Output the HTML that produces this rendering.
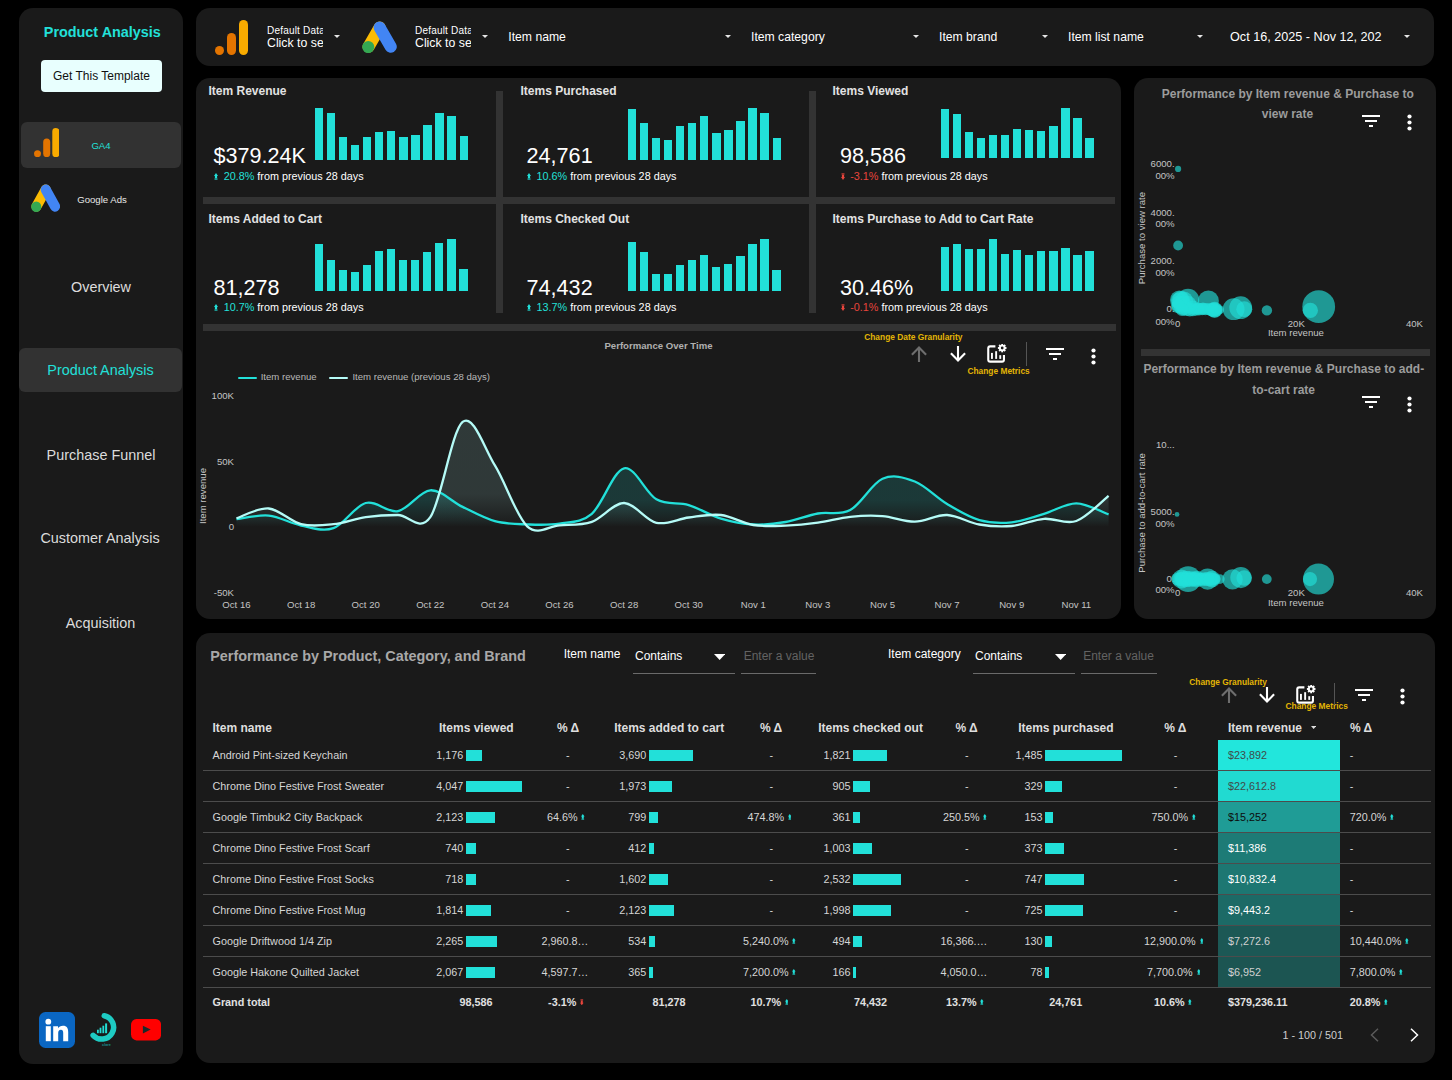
<!DOCTYPE html>
<html><head><meta charset="utf-8"><title>Product Analysis</title>
<style>
html,body{margin:0;padding:0;background:#000;}
body{width:1452px;height:1080px;overflow:hidden;position:relative;font-family:"Liberation Sans",sans-serif;}
#root{position:absolute;left:0;top:0;width:1452px;height:1080px;background:#000;overflow:hidden;}
#root div{box-sizing:border-box;}
</style></head><body><div id="root">
<div style="position:absolute;left:19.2px;top:8.2px;width:164.0px;height:1055.4px;background:#1a1a1a;border-radius:14px;"></div>
<div style="position:absolute;left:195.6px;top:8.2px;width:1238.4px;height:57.7px;background:#1a1a1a;border-radius:14px;"></div>
<div style="position:absolute;left:195.6px;top:78px;width:925.6px;height:541.3px;background:#1a1a1a;border-radius:14px;"></div>
<div style="position:absolute;left:1134.2px;top:78px;width:302.0px;height:540.8px;background:#1a1a1a;border-radius:14px;"></div>
<div style="position:absolute;left:195.6px;top:633.4px;width:1239.0px;height:429.9px;background:#1a1a1a;border-radius:14px;"></div>
<div style="position:absolute;top:23.00px;font-size:14.4px;line-height:19px;color:#22e0d9;font-weight:700;white-space:pre;left:-97.70px;width:400px;text-align:center;">Product Analysis</div>
<div style="position:absolute;left:41px;top:60px;width:121px;height:32px;background:#e8fffe;border-radius:4px;"></div>
<div style="position:absolute;top:68.00px;font-size:12px;line-height:16px;color:#111;font-weight:400;white-space:pre;left:-98.50px;width:400px;text-align:center;">Get This Template</div>
<div style="position:absolute;left:21px;top:122px;width:160px;height:46px;background:#323232;border-radius:6px;"></div>
<svg style="position:absolute;left:33.8px;top:127.5px;" width="25.5" height="29.3" viewBox="0 0 25.5 29.3"><circle cx="3.5" cy="25.7" r="3.5" fill="#e37400"/><rect x="9.2" y="10.5" width="7" height="18.7" rx="3.5" fill="#e37400"/><rect x="18.3" y="0" width="7.1" height="29.2" rx="3.5" fill="#f9ab00"/></svg>
<div style="position:absolute;top:139.50px;font-size:9.6px;line-height:12px;color:#22e0d9;font-weight:400;white-space:pre;left:-99.00px;width:400px;text-align:center;">GA4</div>
<svg preserveAspectRatio="none" style="position:absolute;left:30.5px;top:183.8px;" width="29.5" height="28.185142857142857" viewBox="0 0 35 32"><line x1="17.5" y1="6.5" x2="6.5" y2="25.5" stroke="#fbbc04" stroke-width="12" stroke-linecap="round"/><line x1="17.5" y1="6.5" x2="28.5" y2="25.5" stroke="#4285f4" stroke-width="12" stroke-linecap="round"/><circle cx="6.2" cy="25.8" r="6" fill="#34a853"/></svg>
<div style="position:absolute;top:194.00px;font-size:9.6px;line-height:12px;color:#e6e6e6;font-weight:400;white-space:pre;left:-98.00px;width:400px;text-align:center;">Google Ads</div>
<div style="position:absolute;top:277.50px;font-size:14.4px;line-height:19px;color:#dcdcdc;font-weight:400;white-space:pre;left:-99.00px;width:400px;text-align:center;">Overview</div>
<div style="position:absolute;left:19px;top:348px;width:163px;height:44px;background:#323232;border-radius:6px;"></div>
<div style="position:absolute;top:360.50px;font-size:14.4px;line-height:19px;color:#22e0d9;font-weight:400;white-space:pre;left:-99.50px;width:400px;text-align:center;">Product Analysis</div>
<div style="position:absolute;top:445.50px;font-size:14.4px;line-height:19px;color:#dcdcdc;font-weight:400;white-space:pre;left:-99.00px;width:400px;text-align:center;">Purchase Funnel</div>
<div style="position:absolute;top:528.50px;font-size:14.4px;line-height:19px;color:#dcdcdc;font-weight:400;white-space:pre;left:-100.00px;width:400px;text-align:center;">Customer Analysis</div>
<div style="position:absolute;top:613.50px;font-size:14.4px;line-height:19px;color:#dcdcdc;font-weight:400;white-space:pre;left:-99.50px;width:400px;text-align:center;">Acquisition</div>
<div style="position:absolute;left:39px;top:1011.8px;width:36px;height:36.2px;background:#0a66c2;border-radius:6.5px;"></div>
<svg style="position:absolute;left:39px;top:1012px;" width="36" height="36" viewBox="0 0 36 36"><circle cx="9.3" cy="9.7" r="2.9" fill="#fff"/><rect x="6.8" y="14.2" width="5" height="15" fill="#fff"/><path d="M14.2 14.2h4.8v2.1c.9-1.5 2.6-2.5 5-2.5 4 0 5.2 2.6 5.2 6.3v9.1h-5v-8.2c0-1.9-.4-3.2-2.3-3.2-2 0-2.7 1.4-2.7 3.3v8.1h-5z" fill="#fff"/></svg>
<svg style="position:absolute;left:84px;top:1006px;" width="40" height="46" viewBox="0 0 40 46"><path d="M20.25 9.76 A11.8 11.8 0 1 1 9.13 29.3" fill="none" stroke="#1ecbc3" stroke-width="5.5" stroke-linecap="round"/><rect x="13" y="23.7" width="1.8" height="3.5" fill="#22ddd4"/><rect x="15.6" y="21.7" width="1.8" height="5.5" fill="#22ddd4"/><rect x="18.4" y="19.7" width="1.8" height="7.5" fill="#22ddd4"/><rect x="21.1" y="17.4" width="2" height="9.8" fill="#22ddd4"/><text x="22.4" y="40.4" font-size="3.7" font-weight="700" fill="#17918c" text-anchor="middle" font-family="Liberation Sans">clare</text></svg>
<svg style="position:absolute;left:130.8px;top:1019.3px;" width="30.2" height="21.4" viewBox="0 0 30.2 21.4"><rect x="0" y="0" width="30.2" height="21.4" rx="5.4" ry="6.2" fill="#ff0000"/><path d="M11.9 6.7 L19.7 10.6 L11.9 14.5Z" fill="#1a2a2a"/></svg>
<svg style="position:absolute;left:215px;top:19.7px;" width="33" height="35" viewBox="0 0 33 35"><circle cx="4.5" cy="30.5" r="4.5" fill="#e37400"/><rect x="12" y="13" width="9" height="22" rx="4.5" fill="#e37400"/><rect x="24" y="0" width="9" height="35" rx="4.5" fill="#f9ab00"/></svg>
<div style="position:absolute;left:267px;top:24px;width:56px;height:28px;overflow:hidden;"><div style="font-size:10px;letter-spacing:0.2px;line-height:12px;color:#fff;white-space:pre;margin-top:0.8px">Default Data</div><div style="font-size:12.3px;line-height:14px;color:#fff;white-space:pre;margin-top:-0.8px">Click to select your data</div></div>
<div style="position:absolute;left:415px;top:24px;width:56px;height:28px;overflow:hidden;"><div style="font-size:10px;letter-spacing:0.2px;line-height:12px;color:#fff;white-space:pre;margin-top:0.8px">Default Data</div><div style="font-size:12.3px;line-height:14px;color:#fff;white-space:pre;margin-top:-0.8px">Click to select your data</div></div>
<svg style="position:absolute;left:333.5px;top:35px;" width="6" height="3" viewBox="0 0 6 3"><path d="M0 0H6L3.0 3Z" fill="#e6e6e6"/></svg>
<svg preserveAspectRatio="none" style="position:absolute;left:361.7px;top:20.8px;" width="35.3" height="32.27428571428571" viewBox="0 0 35 32"><line x1="17.5" y1="6.5" x2="6.5" y2="25.5" stroke="#fbbc04" stroke-width="12" stroke-linecap="round"/><line x1="17.5" y1="6.5" x2="28.5" y2="25.5" stroke="#4285f4" stroke-width="12" stroke-linecap="round"/><circle cx="6.2" cy="25.8" r="6" fill="#34a853"/></svg>
<svg style="position:absolute;left:481.5px;top:35px;" width="6" height="3" viewBox="0 0 6 3"><path d="M0 0H6L3.0 3Z" fill="#e6e6e6"/></svg>
<div style="position:absolute;top:28.50px;font-size:12.2px;line-height:16px;color:#fff;font-weight:400;white-space:pre;left:508.30px;">Item name</div>
<svg style="position:absolute;left:724.5px;top:35px;" width="6" height="3" viewBox="0 0 6 3"><path d="M0 0H6L3.0 3Z" fill="#e6e6e6"/></svg>
<div style="position:absolute;top:28.50px;font-size:12.2px;line-height:16px;color:#fff;font-weight:400;white-space:pre;left:751.00px;">Item category</div>
<svg style="position:absolute;left:912.5px;top:35px;" width="6" height="3" viewBox="0 0 6 3"><path d="M0 0H6L3.0 3Z" fill="#e6e6e6"/></svg>
<div style="position:absolute;top:28.50px;font-size:12.2px;line-height:16px;color:#fff;font-weight:400;white-space:pre;left:939.00px;">Item brand</div>
<svg style="position:absolute;left:1041.5px;top:35px;" width="6" height="3" viewBox="0 0 6 3"><path d="M0 0H6L3.0 3Z" fill="#e6e6e6"/></svg>
<div style="position:absolute;top:28.50px;font-size:12.2px;line-height:16px;color:#fff;font-weight:400;white-space:pre;left:1068.00px;">Item list name</div>
<svg style="position:absolute;left:1196.5px;top:35px;" width="6" height="3" viewBox="0 0 6 3"><path d="M0 0H6L3.0 3Z" fill="#e6e6e6"/></svg>
<div style="position:absolute;top:28.80px;font-size:12.63px;line-height:16px;color:#fff;font-weight:400;white-space:pre;left:1230.00px;">Oct 16, 2025 - Nov 12, 202</div>
<svg style="position:absolute;left:1403.5px;top:35px;" width="6" height="3" viewBox="0 0 6 3"><path d="M0 0H6L3.0 3Z" fill="#e6e6e6"/></svg>
<div style="position:absolute;left:203px;top:197px;width:912px;height:7px;background:#333333;border-radius:0px;"></div>
<div style="position:absolute;left:203px;top:324px;width:913px;height:7px;background:#333333;border-radius:0px;"></div>
<div style="position:absolute;left:496px;top:91px;width:7px;height:222px;background:#333333;border-radius:0px;"></div>
<div style="position:absolute;left:809px;top:91px;width:7px;height:222px;background:#333333;border-radius:0px;"></div>
<div style="position:absolute;top:83.00px;font-size:12px;line-height:16px;color:#e2e2e2;font-weight:700;white-space:pre;left:208.50px;">Item Revenue</div>
<div style="position:absolute;left:213.5px;top:143.32px;font-size:21.6px;line-height:26px;color:#fff;white-space:pre">$379.24K</div>
<svg style="position:absolute;left:214.29999999999998px;top:172.9px;" width="4.0" height="7.0" viewBox="0 0 4 7"><g><path d="M2 0 L4 2.9 L3.1 2.9 L3.1 5.2 L0.9 5.2 L0.9 2.9 L0 2.9Z" fill="#22e0d9"/><rect x="0.5" y="5.2" width="3" height="1.8" fill="#22e0d9" opacity="0.62"/></g></svg>
<div style="position:absolute;left:223.7px;top:168.66px;font-size:10.8px;line-height:14px;color:#fff;white-space:pre"><span style="color:#22e0d9">20.8%</span> from previous 28 days</div>
<div style="position:absolute;left:314.80px;top:107.80px;width:8.3px;height:52.40px;background:#22e0d9"></div>
<div style="position:absolute;left:326.86px;top:113.00px;width:8.3px;height:47.20px;background:#22e0d9"></div>
<div style="position:absolute;left:338.92px;top:136.90px;width:8.3px;height:23.30px;background:#22e0d9"></div>
<div style="position:absolute;left:350.98px;top:145.00px;width:8.3px;height:15.20px;background:#22e0d9"></div>
<div style="position:absolute;left:363.04px;top:136.90px;width:8.3px;height:23.30px;background:#22e0d9"></div>
<div style="position:absolute;left:375.10px;top:132.10px;width:8.3px;height:28.10px;background:#22e0d9"></div>
<div style="position:absolute;left:387.16px;top:130.50px;width:8.3px;height:29.70px;background:#22e0d9"></div>
<div style="position:absolute;left:399.22px;top:136.90px;width:8.3px;height:23.30px;background:#22e0d9"></div>
<div style="position:absolute;left:411.28px;top:135.20px;width:8.3px;height:25.00px;background:#22e0d9"></div>
<div style="position:absolute;left:423.34px;top:125.10px;width:8.3px;height:35.10px;background:#22e0d9"></div>
<div style="position:absolute;left:435.40px;top:113.40px;width:8.3px;height:46.80px;background:#22e0d9"></div>
<div style="position:absolute;left:447.46px;top:116.10px;width:8.3px;height:44.10px;background:#22e0d9"></div>
<div style="position:absolute;left:459.52px;top:136.30px;width:8.3px;height:23.90px;background:#22e0d9"></div>
<div style="position:absolute;top:83.00px;font-size:12px;line-height:16px;color:#e2e2e2;font-weight:700;white-space:pre;left:520.50px;">Items Purchased</div>
<div style="position:absolute;left:526.6px;top:143.32px;font-size:21.6px;line-height:26px;color:#fff;white-space:pre">24,761</div>
<svg style="position:absolute;left:527.2px;top:172.9px;" width="4.0" height="7.0" viewBox="0 0 4 7"><g><path d="M2 0 L4 2.9 L3.1 2.9 L3.1 5.2 L0.9 5.2 L0.9 2.9 L0 2.9Z" fill="#22e0d9"/><rect x="0.5" y="5.2" width="3" height="1.8" fill="#22e0d9" opacity="0.62"/></g></svg>
<div style="position:absolute;left:536.6px;top:168.66px;font-size:10.8px;line-height:14px;color:#fff;white-space:pre"><span style="color:#22e0d9">10.6%</span> from previous 28 days</div>
<div style="position:absolute;left:627.80px;top:108.80px;width:8.3px;height:51.40px;background:#22e0d9"></div>
<div style="position:absolute;left:639.86px;top:123.00px;width:8.3px;height:37.20px;background:#22e0d9"></div>
<div style="position:absolute;left:651.92px;top:137.90px;width:8.3px;height:22.30px;background:#22e0d9"></div>
<div style="position:absolute;left:663.98px;top:140.20px;width:8.3px;height:20.00px;background:#22e0d9"></div>
<div style="position:absolute;left:676.04px;top:126.10px;width:8.3px;height:34.10px;background:#22e0d9"></div>
<div style="position:absolute;left:688.10px;top:123.00px;width:8.3px;height:37.20px;background:#22e0d9"></div>
<div style="position:absolute;left:700.16px;top:116.10px;width:8.3px;height:44.10px;background:#22e0d9"></div>
<div style="position:absolute;left:712.22px;top:132.50px;width:8.3px;height:27.70px;background:#22e0d9"></div>
<div style="position:absolute;left:724.28px;top:129.60px;width:8.3px;height:30.60px;background:#22e0d9"></div>
<div style="position:absolute;left:736.34px;top:120.90px;width:8.3px;height:39.30px;background:#22e0d9"></div>
<div style="position:absolute;left:748.40px;top:108.00px;width:8.3px;height:52.20px;background:#22e0d9"></div>
<div style="position:absolute;left:760.46px;top:112.80px;width:8.3px;height:47.40px;background:#22e0d9"></div>
<div style="position:absolute;left:772.52px;top:138.20px;width:8.3px;height:22.00px;background:#22e0d9"></div>
<div style="position:absolute;top:83.00px;font-size:12px;line-height:16px;color:#e2e2e2;font-weight:700;white-space:pre;left:832.50px;">Items Viewed</div>
<div style="position:absolute;left:840px;top:143.32px;font-size:21.6px;line-height:26px;color:#fff;white-space:pre">98,586</div>
<svg style="position:absolute;left:840.8000000000001px;top:172.9px;" width="4.0" height="7.0" viewBox="0 0 4 7"><g transform="rotate(180 2 3.5)"><path d="M2 0 L4 2.9 L3.1 2.9 L3.1 5.2 L0.9 5.2 L0.9 2.9 L0 2.9Z" fill="#e8453c"/><rect x="0.5" y="5.2" width="3" height="1.8" fill="#e8453c" opacity="0.62"/></g></svg>
<div style="position:absolute;left:850.2px;top:168.66px;font-size:10.8px;line-height:14px;color:#fff;white-space:pre"><span style="color:#e8453c">-3.1%</span> from previous 28 days</div>
<div style="position:absolute;left:940.70px;top:108.90px;width:8.3px;height:49.10px;background:#22e0d9"></div>
<div style="position:absolute;left:952.76px;top:114.30px;width:8.3px;height:43.70px;background:#22e0d9"></div>
<div style="position:absolute;left:964.82px;top:131.80px;width:8.3px;height:26.20px;background:#22e0d9"></div>
<div style="position:absolute;left:976.88px;top:138.20px;width:8.3px;height:19.80px;background:#22e0d9"></div>
<div style="position:absolute;left:988.94px;top:134.90px;width:8.3px;height:23.10px;background:#22e0d9"></div>
<div style="position:absolute;left:1001.00px;top:134.50px;width:8.3px;height:23.50px;background:#22e0d9"></div>
<div style="position:absolute;left:1013.06px;top:129.10px;width:8.3px;height:28.90px;background:#22e0d9"></div>
<div style="position:absolute;left:1025.12px;top:130.10px;width:8.3px;height:27.90px;background:#22e0d9"></div>
<div style="position:absolute;left:1037.18px;top:131.20px;width:8.3px;height:26.80px;background:#22e0d9"></div>
<div style="position:absolute;left:1049.24px;top:126.20px;width:8.3px;height:31.80px;background:#22e0d9"></div>
<div style="position:absolute;left:1061.30px;top:108.10px;width:8.3px;height:49.90px;background:#22e0d9"></div>
<div style="position:absolute;left:1073.36px;top:118.10px;width:8.3px;height:39.90px;background:#22e0d9"></div>
<div style="position:absolute;left:1085.42px;top:137.60px;width:8.3px;height:20.40px;background:#22e0d9"></div>
<div style="position:absolute;top:210.70px;font-size:12px;line-height:16px;color:#e2e2e2;font-weight:700;white-space:pre;left:208.50px;">Items Added to Cart</div>
<div style="position:absolute;left:213.5px;top:275.42px;font-size:21.6px;line-height:26px;color:#fff;white-space:pre">81,278</div>
<svg style="position:absolute;left:214.29999999999998px;top:304.1px;" width="4.0" height="7.0" viewBox="0 0 4 7"><g><path d="M2 0 L4 2.9 L3.1 2.9 L3.1 5.2 L0.9 5.2 L0.9 2.9 L0 2.9Z" fill="#22e0d9"/><rect x="0.5" y="5.2" width="3" height="1.8" fill="#22e0d9" opacity="0.62"/></g></svg>
<div style="position:absolute;left:223.7px;top:299.86px;font-size:10.8px;line-height:14px;color:#fff;white-space:pre"><span style="color:#22e0d9">10.7%</span> from previous 28 days</div>
<div style="position:absolute;left:314.60px;top:244.10px;width:8.3px;height:46.60px;background:#22e0d9"></div>
<div style="position:absolute;left:326.66px;top:259.50px;width:8.3px;height:31.20px;background:#22e0d9"></div>
<div style="position:absolute;left:338.72px;top:269.90px;width:8.3px;height:20.80px;background:#22e0d9"></div>
<div style="position:absolute;left:350.78px;top:271.80px;width:8.3px;height:18.90px;background:#22e0d9"></div>
<div style="position:absolute;left:362.84px;top:264.90px;width:8.3px;height:25.80px;background:#22e0d9"></div>
<div style="position:absolute;left:374.90px;top:250.80px;width:8.3px;height:39.90px;background:#22e0d9"></div>
<div style="position:absolute;left:386.96px;top:248.50px;width:8.3px;height:42.20px;background:#22e0d9"></div>
<div style="position:absolute;left:399.02px;top:260.30px;width:8.3px;height:30.40px;background:#22e0d9"></div>
<div style="position:absolute;left:411.08px;top:259.70px;width:8.3px;height:31.00px;background:#22e0d9"></div>
<div style="position:absolute;left:423.14px;top:251.60px;width:8.3px;height:39.10px;background:#22e0d9"></div>
<div style="position:absolute;left:435.20px;top:242.70px;width:8.3px;height:48.00px;background:#22e0d9"></div>
<div style="position:absolute;left:447.26px;top:238.50px;width:8.3px;height:52.20px;background:#22e0d9"></div>
<div style="position:absolute;left:459.32px;top:268.70px;width:8.3px;height:22.00px;background:#22e0d9"></div>
<div style="position:absolute;top:210.70px;font-size:12px;line-height:16px;color:#e2e2e2;font-weight:700;white-space:pre;left:520.50px;">Items Checked Out</div>
<div style="position:absolute;left:526.6px;top:275.42px;font-size:21.6px;line-height:26px;color:#fff;white-space:pre">74,432</div>
<svg style="position:absolute;left:527.2px;top:304.1px;" width="4.0" height="7.0" viewBox="0 0 4 7"><g><path d="M2 0 L4 2.9 L3.1 2.9 L3.1 5.2 L0.9 5.2 L0.9 2.9 L0 2.9Z" fill="#22e0d9"/><rect x="0.5" y="5.2" width="3" height="1.8" fill="#22e0d9" opacity="0.62"/></g></svg>
<div style="position:absolute;left:536.6px;top:299.86px;font-size:10.8px;line-height:14px;color:#fff;white-space:pre"><span style="color:#22e0d9">13.7%</span> from previous 28 days</div>
<div style="position:absolute;left:627.70px;top:241.60px;width:8.3px;height:49.10px;background:#22e0d9"></div>
<div style="position:absolute;left:639.76px;top:252.40px;width:8.3px;height:38.30px;background:#22e0d9"></div>
<div style="position:absolute;left:651.82px;top:273.70px;width:8.3px;height:17.00px;background:#22e0d9"></div>
<div style="position:absolute;left:663.88px;top:273.90px;width:8.3px;height:16.80px;background:#22e0d9"></div>
<div style="position:absolute;left:675.94px;top:264.50px;width:8.3px;height:26.20px;background:#22e0d9"></div>
<div style="position:absolute;left:688.00px;top:259.70px;width:8.3px;height:31.00px;background:#22e0d9"></div>
<div style="position:absolute;left:700.06px;top:254.50px;width:8.3px;height:36.20px;background:#22e0d9"></div>
<div style="position:absolute;left:712.12px;top:266.60px;width:8.3px;height:24.10px;background:#22e0d9"></div>
<div style="position:absolute;left:724.18px;top:263.50px;width:8.3px;height:27.20px;background:#22e0d9"></div>
<div style="position:absolute;left:736.24px;top:255.60px;width:8.3px;height:35.10px;background:#22e0d9"></div>
<div style="position:absolute;left:748.30px;top:244.10px;width:8.3px;height:46.60px;background:#22e0d9"></div>
<div style="position:absolute;left:760.36px;top:238.50px;width:8.3px;height:52.20px;background:#22e0d9"></div>
<div style="position:absolute;left:772.42px;top:269.50px;width:8.3px;height:21.20px;background:#22e0d9"></div>
<div style="position:absolute;top:210.70px;font-size:12px;line-height:16px;color:#e2e2e2;font-weight:700;white-space:pre;left:832.50px;">Items Purchase to Add to Cart Rate</div>
<div style="position:absolute;left:840px;top:275.42px;font-size:21.6px;line-height:26px;color:#fff;white-space:pre">30.46%</div>
<svg style="position:absolute;left:840.8000000000001px;top:304.1px;" width="4.0" height="7.0" viewBox="0 0 4 7"><g transform="rotate(180 2 3.5)"><path d="M2 0 L4 2.9 L3.1 2.9 L3.1 5.2 L0.9 5.2 L0.9 2.9 L0 2.9Z" fill="#e8453c"/><rect x="0.5" y="5.2" width="3" height="1.8" fill="#e8453c" opacity="0.62"/></g></svg>
<div style="position:absolute;left:850.2px;top:299.86px;font-size:10.8px;line-height:14px;color:#fff;white-space:pre"><span style="color:#e8453c">-0.1%</span> from previous 28 days</div>
<div style="position:absolute;left:940.70px;top:247.20px;width:8.3px;height:43.50px;background:#22e0d9"></div>
<div style="position:absolute;left:952.76px;top:243.90px;width:8.3px;height:46.80px;background:#22e0d9"></div>
<div style="position:absolute;left:964.82px;top:248.70px;width:8.3px;height:42.00px;background:#22e0d9"></div>
<div style="position:absolute;left:976.88px;top:249.10px;width:8.3px;height:41.60px;background:#22e0d9"></div>
<div style="position:absolute;left:988.94px;top:238.50px;width:8.3px;height:52.20px;background:#22e0d9"></div>
<div style="position:absolute;left:1001.00px;top:253.50px;width:8.3px;height:37.20px;background:#22e0d9"></div>
<div style="position:absolute;left:1013.06px;top:249.50px;width:8.3px;height:41.20px;background:#22e0d9"></div>
<div style="position:absolute;left:1025.12px;top:254.50px;width:8.3px;height:36.20px;background:#22e0d9"></div>
<div style="position:absolute;left:1037.18px;top:251.40px;width:8.3px;height:39.30px;background:#22e0d9"></div>
<div style="position:absolute;left:1049.24px;top:250.80px;width:8.3px;height:39.90px;background:#22e0d9"></div>
<div style="position:absolute;left:1061.30px;top:247.60px;width:8.3px;height:43.10px;background:#22e0d9"></div>
<div style="position:absolute;left:1073.36px;top:254.50px;width:8.3px;height:36.20px;background:#22e0d9"></div>
<div style="position:absolute;left:1085.42px;top:251.20px;width:8.3px;height:39.50px;background:#22e0d9"></div>
<div style="position:absolute;top:339.70px;font-size:9.6px;line-height:12px;color:#b0b0b0;font-weight:700;white-space:pre;left:458.50px;width:400px;text-align:center;">Performance Over Time</div>
<div style="position:absolute;top:331.70px;font-size:8.4px;line-height:11px;color:#e3b505;font-weight:700;white-space:pre;left:864.20px;">Change Date Granularity</div>
<svg style="position:absolute;left:911px;top:346.1px;" width="16" height="16" viewBox="0 0 16 16"><path d="M8 16V1.8M0.9 8.7L8 1.5L15.1 8.7" fill="none" stroke="#6e6e6e" stroke-width="2.1"/></svg>
<svg style="position:absolute;left:950px;top:346.1px;" width="16" height="16" viewBox="0 0 16 16"><path d="M8 0V14.2M0.9 7.3L8 14.5L15.1 7.3" fill="none" stroke="#fff" stroke-width="2.1"/></svg>
<svg style="position:absolute;left:987px;top:343.9px;" width="19.6" height="19" viewBox="0 0 19.6 19"><path d="M8.4 2.35H3.2A2 2 0 0 0 1.25 4.3V15.7A2 2 0 0 0 3.2 17.65H15A2 2 0 0 0 16.95 15.7V11" fill="none" stroke="#fff" stroke-width="2.1"/><rect x="4" y="8.9" width="1.9" height="6" fill="#fff"/><rect x="8.2" y="7.2" width="1.9" height="7.7" fill="#fff"/><rect x="12.3" y="11.2" width="1.9" height="3.7" fill="#fff"/><circle cx="15.2" cy="4.0" r="2.35" fill="none" stroke="#fff" stroke-width="1.9"/><rect x="14.25" y="-0.2999999999999998" width="1.9" height="2" fill="#fff" transform="rotate(0 15.2 4.0)"/><rect x="14.25" y="-0.2999999999999998" width="1.9" height="2" fill="#fff" transform="rotate(45 15.2 4.0)"/><rect x="14.25" y="-0.2999999999999998" width="1.9" height="2" fill="#fff" transform="rotate(90 15.2 4.0)"/><rect x="14.25" y="-0.2999999999999998" width="1.9" height="2" fill="#fff" transform="rotate(135 15.2 4.0)"/><rect x="14.25" y="-0.2999999999999998" width="1.9" height="2" fill="#fff" transform="rotate(180 15.2 4.0)"/><rect x="14.25" y="-0.2999999999999998" width="1.9" height="2" fill="#fff" transform="rotate(225 15.2 4.0)"/><rect x="14.25" y="-0.2999999999999998" width="1.9" height="2" fill="#fff" transform="rotate(270 15.2 4.0)"/><rect x="14.25" y="-0.2999999999999998" width="1.9" height="2" fill="#fff" transform="rotate(315 15.2 4.0)"/></svg>
<div style="position:absolute;top:365.70px;font-size:8.4px;line-height:11px;color:#e3b505;font-weight:700;white-space:pre;left:967.40px;">Change Metrics</div>
<div style="position:absolute;left:1025.5px;top:342px;width:1px;height:24px;background:#555;border-radius:0px;"></div>
<svg style="position:absolute;left:1046px;top:348px;" width="18" height="12" viewBox="0 0 18 12"><rect x="0" y="0" width="18" height="2" fill="#fff"/><rect x="3" y="5" width="12" height="2" fill="#fff"/><rect x="7" y="10" width="4" height="2" fill="#fff"/></svg>
<svg style="position:absolute;left:1090.5px;top:347.5px;" width="5" height="17" viewBox="0 0 5 17"><circle cx="2.5" cy="2.5" r="2.1" fill="#fff"/><circle cx="2.5" cy="8.5" r="2.1" fill="#fff"/><circle cx="2.5" cy="14.5" r="2.1" fill="#fff"/></svg>
<div style="position:absolute;left:237.7px;top:376.6px;width:19px;height:2.3px;background:#22e0d9;border-radius:1px;"></div>
<div style="position:absolute;top:371.20px;font-size:9.6px;line-height:12px;color:#b8b8b8;font-weight:400;white-space:pre;left:260.70px;">Item revenue</div>
<div style="position:absolute;left:328.8px;top:376.6px;width:19px;height:2.3px;background:#b5fbf7;border-radius:1px;"></div>
<div style="position:absolute;top:371.20px;font-size:9.6px;line-height:12px;color:#b8b8b8;font-weight:400;white-space:pre;left:352.40px;">Item revenue (previous 28 days)</div>
<div style="position:absolute;top:390.30px;font-size:9.6px;line-height:12px;color:#c4c4c4;font-weight:400;white-space:pre;right:1218.00px;text-align:right;">100K</div>
<div style="position:absolute;top:456.10px;font-size:9.6px;line-height:12px;color:#c4c4c4;font-weight:400;white-space:pre;right:1218.00px;text-align:right;">50K</div>
<div style="position:absolute;top:521.10px;font-size:9.6px;line-height:12px;color:#c4c4c4;font-weight:400;white-space:pre;right:1218.00px;text-align:right;">0</div>
<div style="position:absolute;top:587.30px;font-size:9.6px;line-height:12px;color:#c4c4c4;font-weight:400;white-space:pre;right:1218.00px;text-align:right;">-50K</div>
<div style="position:absolute;left:153px;top:489.5px;width:100px;height:12px;line-height:12px;font-size:9.6px;color:#c4c4c4;text-align:center;transform:rotate(-90deg);white-space:pre">Item revenue</div>
<div style="position:absolute;top:599.20px;font-size:9.6px;line-height:12px;color:#c4c4c4;font-weight:400;white-space:pre;left:36.50px;width:400px;text-align:center;">Oct 16</div>
<div style="position:absolute;top:599.20px;font-size:9.6px;line-height:12px;color:#c4c4c4;font-weight:400;white-space:pre;left:101.10px;width:400px;text-align:center;">Oct 18</div>
<div style="position:absolute;top:599.20px;font-size:9.6px;line-height:12px;color:#c4c4c4;font-weight:400;white-space:pre;left:165.70px;width:400px;text-align:center;">Oct 20</div>
<div style="position:absolute;top:599.20px;font-size:9.6px;line-height:12px;color:#c4c4c4;font-weight:400;white-space:pre;left:230.30px;width:400px;text-align:center;">Oct 22</div>
<div style="position:absolute;top:599.20px;font-size:9.6px;line-height:12px;color:#c4c4c4;font-weight:400;white-space:pre;left:294.90px;width:400px;text-align:center;">Oct 24</div>
<div style="position:absolute;top:599.20px;font-size:9.6px;line-height:12px;color:#c4c4c4;font-weight:400;white-space:pre;left:359.50px;width:400px;text-align:center;">Oct 26</div>
<div style="position:absolute;top:599.20px;font-size:9.6px;line-height:12px;color:#c4c4c4;font-weight:400;white-space:pre;left:424.10px;width:400px;text-align:center;">Oct 28</div>
<div style="position:absolute;top:599.20px;font-size:9.6px;line-height:12px;color:#c4c4c4;font-weight:400;white-space:pre;left:488.70px;width:400px;text-align:center;">Oct 30</div>
<div style="position:absolute;top:599.20px;font-size:9.6px;line-height:12px;color:#c4c4c4;font-weight:400;white-space:pre;left:553.30px;width:400px;text-align:center;">Nov 1</div>
<div style="position:absolute;top:599.20px;font-size:9.6px;line-height:12px;color:#c4c4c4;font-weight:400;white-space:pre;left:617.90px;width:400px;text-align:center;">Nov 3</div>
<div style="position:absolute;top:599.20px;font-size:9.6px;line-height:12px;color:#c4c4c4;font-weight:400;white-space:pre;left:682.50px;width:400px;text-align:center;">Nov 5</div>
<div style="position:absolute;top:599.20px;font-size:9.6px;line-height:12px;color:#c4c4c4;font-weight:400;white-space:pre;left:747.10px;width:400px;text-align:center;">Nov 7</div>
<div style="position:absolute;top:599.20px;font-size:9.6px;line-height:12px;color:#c4c4c4;font-weight:400;white-space:pre;left:811.70px;width:400px;text-align:center;">Nov 9</div>
<div style="position:absolute;top:599.20px;font-size:9.6px;line-height:12px;color:#c4c4c4;font-weight:400;white-space:pre;left:876.30px;width:400px;text-align:center;">Nov 11</div>
<svg style="position:absolute;left:0px;top:0px;pointer-events:none;" width="1452" height="1080" viewBox="0 0 1452 1080"><defs><linearGradient id="gT" gradientUnits="userSpaceOnUse" x1="0" y1="400" x2="0" y2="527.0"><stop offset="0" stop-color="#22e0d9" stop-opacity="0.16"/><stop offset="0.79" stop-color="#22e0d9" stop-opacity="0.155"/><stop offset="1" stop-color="#22e0d9" stop-opacity="0.0"/></linearGradient><linearGradient id="gL" gradientUnits="userSpaceOnUse" x1="0" y1="400" x2="0" y2="527.0"><stop offset="0" stop-color="#b5fbf7" stop-opacity="0.14"/><stop offset="0.74" stop-color="#b5fbf7" stop-opacity="0.135"/><stop offset="1" stop-color="#b5fbf7" stop-opacity="0.0"/></linearGradient></defs><path d="M236.50 518.20 C241.88 516.58 258.03 507.50 268.80 508.50 C279.57 509.50 290.33 521.58 301.10 524.20 C311.87 526.82 322.63 525.38 333.40 524.20 C344.17 523.02 354.93 518.63 365.70 517.10 C376.47 515.57 387.23 514.98 398.00 515.00 C408.77 515.02 419.53 532.72 430.30 517.20 C441.07 501.68 451.83 430.53 462.60 421.90 C473.37 413.27 484.13 448.00 494.90 465.40 C505.67 482.80 516.43 516.32 527.20 526.30 C537.97 536.28 548.73 526.05 559.50 525.30 C570.27 524.55 581.03 525.52 591.80 521.80 C602.57 518.08 613.33 502.83 624.10 503.00 C634.87 503.17 645.63 520.38 656.40 522.80 C667.17 525.22 677.93 518.80 688.70 517.50 C699.47 516.20 710.23 513.75 721.00 515.00 C731.77 516.25 742.53 523.23 753.30 525.00 C764.07 526.77 774.83 525.98 785.60 525.60 C796.37 525.22 807.13 524.17 817.90 522.70 C828.67 521.23 839.43 517.90 850.20 516.80 C860.97 515.70 871.73 515.30 882.50 516.10 C893.27 516.90 904.03 521.78 914.80 521.60 C925.57 521.42 936.33 514.52 947.10 515.00 C957.87 515.48 968.63 522.67 979.40 524.50 C990.17 526.33 1000.93 526.95 1011.70 526.00 C1022.47 525.05 1033.23 519.63 1044.00 518.80 C1054.77 517.97 1065.53 524.83 1076.30 521.00 C1087.07 517.17 1103.22 500.00 1108.60 495.80 L1108.60 527.0 L236.50 527.0 Z" fill="url(#gL)"/><path d="M236.50 519.10 C241.88 518.52 258.03 514.53 268.80 515.60 C279.57 516.67 290.33 523.40 301.10 525.50 C311.87 527.60 322.63 531.95 333.40 528.20 C344.17 524.45 354.93 505.85 365.70 503.00 C376.47 500.15 387.23 513.22 398.00 511.10 C408.77 508.98 419.53 491.00 430.30 490.30 C441.07 489.60 451.83 501.75 462.60 506.90 C473.37 512.05 484.13 518.28 494.90 521.20 C505.67 524.12 516.43 524.00 527.20 524.40 C537.97 524.80 548.73 525.37 559.50 523.60 C570.27 521.83 581.03 523.02 591.80 513.80 C602.57 504.58 613.33 470.72 624.10 468.30 C634.87 465.88 645.63 493.17 656.40 499.30 C667.17 505.43 677.93 501.87 688.70 505.10 C699.47 508.33 710.23 515.47 721.00 518.70 C731.77 521.93 742.53 523.95 753.30 524.50 C764.07 525.05 774.83 523.83 785.60 522.00 C796.37 520.17 807.13 515.50 817.90 513.50 C828.67 511.50 839.43 515.78 850.20 510.00 C860.97 504.22 871.73 483.55 882.50 478.80 C893.27 474.05 904.03 477.30 914.80 481.50 C925.57 485.70 936.33 497.57 947.10 504.00 C957.87 510.43 968.63 517.05 979.40 520.10 C990.17 523.15 1000.93 523.33 1011.70 522.30 C1022.47 521.27 1033.23 517.07 1044.00 513.90 C1054.77 510.73 1065.53 503.22 1076.30 503.30 C1087.07 503.38 1103.22 512.55 1108.60 514.40 L1108.60 527.0 L236.50 527.0 Z" fill="url(#gT)"/><path d="M236.50 519.10 C241.88 518.52 258.03 514.53 268.80 515.60 C279.57 516.67 290.33 523.40 301.10 525.50 C311.87 527.60 322.63 531.95 333.40 528.20 C344.17 524.45 354.93 505.85 365.70 503.00 C376.47 500.15 387.23 513.22 398.00 511.10 C408.77 508.98 419.53 491.00 430.30 490.30 C441.07 489.60 451.83 501.75 462.60 506.90 C473.37 512.05 484.13 518.28 494.90 521.20 C505.67 524.12 516.43 524.00 527.20 524.40 C537.97 524.80 548.73 525.37 559.50 523.60 C570.27 521.83 581.03 523.02 591.80 513.80 C602.57 504.58 613.33 470.72 624.10 468.30 C634.87 465.88 645.63 493.17 656.40 499.30 C667.17 505.43 677.93 501.87 688.70 505.10 C699.47 508.33 710.23 515.47 721.00 518.70 C731.77 521.93 742.53 523.95 753.30 524.50 C764.07 525.05 774.83 523.83 785.60 522.00 C796.37 520.17 807.13 515.50 817.90 513.50 C828.67 511.50 839.43 515.78 850.20 510.00 C860.97 504.22 871.73 483.55 882.50 478.80 C893.27 474.05 904.03 477.30 914.80 481.50 C925.57 485.70 936.33 497.57 947.10 504.00 C957.87 510.43 968.63 517.05 979.40 520.10 C990.17 523.15 1000.93 523.33 1011.70 522.30 C1022.47 521.27 1033.23 517.07 1044.00 513.90 C1054.77 510.73 1065.53 503.22 1076.30 503.30 C1087.07 503.38 1103.22 512.55 1108.60 514.40" fill="none" stroke="#22e0d9" stroke-width="2.3" stroke-linejoin="round"/><path d="M236.50 518.20 C241.88 516.58 258.03 507.50 268.80 508.50 C279.57 509.50 290.33 521.58 301.10 524.20 C311.87 526.82 322.63 525.38 333.40 524.20 C344.17 523.02 354.93 518.63 365.70 517.10 C376.47 515.57 387.23 514.98 398.00 515.00 C408.77 515.02 419.53 532.72 430.30 517.20 C441.07 501.68 451.83 430.53 462.60 421.90 C473.37 413.27 484.13 448.00 494.90 465.40 C505.67 482.80 516.43 516.32 527.20 526.30 C537.97 536.28 548.73 526.05 559.50 525.30 C570.27 524.55 581.03 525.52 591.80 521.80 C602.57 518.08 613.33 502.83 624.10 503.00 C634.87 503.17 645.63 520.38 656.40 522.80 C667.17 525.22 677.93 518.80 688.70 517.50 C699.47 516.20 710.23 513.75 721.00 515.00 C731.77 516.25 742.53 523.23 753.30 525.00 C764.07 526.77 774.83 525.98 785.60 525.60 C796.37 525.22 807.13 524.17 817.90 522.70 C828.67 521.23 839.43 517.90 850.20 516.80 C860.97 515.70 871.73 515.30 882.50 516.10 C893.27 516.90 904.03 521.78 914.80 521.60 C925.57 521.42 936.33 514.52 947.10 515.00 C957.87 515.48 968.63 522.67 979.40 524.50 C990.17 526.33 1000.93 526.95 1011.70 526.00 C1022.47 525.05 1033.23 519.63 1044.00 518.80 C1054.77 517.97 1065.53 524.83 1076.30 521.00 C1087.07 517.17 1103.22 500.00 1108.60 495.80" fill="none" stroke="#b5fbf7" stroke-width="2.3" stroke-linejoin="round"/></svg>
<div style="position:absolute;top:86.00px;font-size:12px;line-height:16px;color:#9c9c9c;font-weight:700;white-space:pre;left:1087.80px;width:400px;text-align:center;">Performance by Item revenue &amp; Purchase to</div>
<div style="position:absolute;top:106.00px;font-size:12px;line-height:16px;color:#9c9c9c;font-weight:700;white-space:pre;left:1087.50px;width:400px;text-align:center;">view rate</div>
<svg style="position:absolute;left:1362px;top:114.8px;" width="18" height="12" viewBox="0 0 18 12"><rect x="0" y="0" width="18" height="2" fill="#fff"/><rect x="3" y="5" width="12" height="2" fill="#fff"/><rect x="7" y="10" width="4" height="2" fill="#fff"/></svg>
<svg style="position:absolute;left:1406.5px;top:113.8px;" width="5" height="17" viewBox="0 0 5 17"><circle cx="2.5" cy="2.5" r="2.1" fill="#fff"/><circle cx="2.5" cy="8.5" r="2.1" fill="#fff"/><circle cx="2.5" cy="14.5" r="2.1" fill="#fff"/></svg>
<div style="position:absolute;top:157.80px;font-size:9.6px;line-height:12px;color:#c4c4c4;font-weight:400;white-space:pre;right:277.40px;text-align:right;">6000.</div>
<div style="position:absolute;top:170.00px;font-size:9.6px;line-height:12px;color:#c4c4c4;font-weight:400;white-space:pre;right:277.40px;text-align:right;">00%</div>
<div style="position:absolute;top:206.90px;font-size:9.6px;line-height:12px;color:#c4c4c4;font-weight:400;white-space:pre;right:277.40px;text-align:right;">4000.</div>
<div style="position:absolute;top:218.40px;font-size:9.6px;line-height:12px;color:#c4c4c4;font-weight:400;white-space:pre;right:277.40px;text-align:right;">00%</div>
<div style="position:absolute;top:254.50px;font-size:9.6px;line-height:12px;color:#c4c4c4;font-weight:400;white-space:pre;right:277.40px;text-align:right;">2000.</div>
<div style="position:absolute;top:266.50px;font-size:9.6px;line-height:12px;color:#c4c4c4;font-weight:400;white-space:pre;right:277.40px;text-align:right;">00%</div>
<div style="position:absolute;top:303.30px;font-size:9.6px;line-height:12px;color:#c4c4c4;font-weight:400;white-space:pre;right:277.40px;text-align:right;">0.</div>
<div style="position:absolute;top:315.50px;font-size:9.6px;line-height:12px;color:#c4c4c4;font-weight:400;white-space:pre;right:277.40px;text-align:right;">00%</div>
<div style="position:absolute;left:1081.5px;top:231.5px;width:120px;height:12px;line-height:12px;font-size:9.6px;color:#c4c4c4;text-align:center;transform:rotate(-90deg);white-space:pre">Purchase to view rate</div>
<div style="position:absolute;top:317.80px;font-size:9.6px;line-height:12px;color:#c4c4c4;font-weight:400;white-space:pre;left:977.70px;width:400px;text-align:center;">0</div>
<div style="position:absolute;top:317.80px;font-size:9.6px;line-height:12px;color:#c4c4c4;font-weight:400;white-space:pre;left:1096.30px;width:400px;text-align:center;">20K</div>
<div style="position:absolute;top:317.80px;font-size:9.6px;line-height:12px;color:#c4c4c4;font-weight:400;white-space:pre;left:1214.50px;width:400px;text-align:center;">40K</div>
<div style="position:absolute;top:327.30px;font-size:9.6px;line-height:12px;color:#c4c4c4;font-weight:400;white-space:pre;left:1095.90px;width:400px;text-align:center;">Item revenue</div>
<svg style="position:absolute;left:0px;top:0px;pointer-events:none;" width="1452" height="1080" viewBox="0 0 1452 1080"><circle cx="1178.1" cy="168.9" r="3.1" fill="rgba(34,224,217,0.64)"/><circle cx="1178.1" cy="245.5" r="4.9" fill="rgba(34,224,217,0.64)"/><circle cx="1318.7" cy="306.7" r="16.4" fill="rgba(34,224,217,0.64)"/><circle cx="1310.3" cy="310.4" r="7.7" fill="rgba(34,224,217,0.64)"/><circle cx="1266.9" cy="310.4" r="5.2" fill="rgba(34,224,217,0.64)"/><circle cx="1233.6" cy="309.2" r="10.9" fill="rgba(34,224,217,0.64)"/><circle cx="1240.7" cy="307.7" r="11.4" fill="rgba(34,224,217,0.64)"/><circle cx="1244.3" cy="309.2" r="8" fill="rgba(34,224,217,0.64)"/><circle cx="1179.3" cy="299.9" r="9.3" fill="rgba(34,224,217,0.64)"/><circle cx="1188" cy="300" r="11.2" fill="rgba(34,224,217,0.64)"/><circle cx="1208.4" cy="301" r="10.5" fill="rgba(34,224,217,0.64)"/><circle cx="1214.6" cy="309.8" r="8" fill="rgba(34,224,217,0.64)"/><circle cx="1219.5" cy="309.8" r="4.6" fill="rgba(34,224,217,0.64)"/><circle cx="1177.4" cy="306.9" r="6.2" fill="rgba(34,224,217,0.64)"/><circle cx="1180.5" cy="307.5" r="6.5" fill="rgba(34,224,217,0.64)"/><circle cx="1183.6" cy="308.7" r="6.8" fill="rgba(34,224,217,0.64)"/><circle cx="1186.7" cy="309.1" r="6.8" fill="rgba(34,224,217,0.64)"/><circle cx="1189.8" cy="309.7" r="6.8" fill="rgba(34,224,217,0.64)"/><circle cx="1192.9" cy="309.7" r="6.5" fill="rgba(34,224,217,0.64)"/><circle cx="1196" cy="309.5" r="6.2" fill="rgba(34,224,217,0.64)"/><circle cx="1199.1" cy="309.3" r="6.2" fill="rgba(34,224,217,0.64)"/><circle cx="1202.2" cy="309.1" r="6.2" fill="rgba(34,224,217,0.64)"/><circle cx="1205.3" cy="309.1" r="6.2" fill="rgba(34,224,217,0.64)"/><circle cx="1208.4" cy="309.1" r="6.2" fill="rgba(34,224,217,0.64)"/><circle cx="1211.5" cy="309.7" r="6.5" fill="rgba(34,224,217,0.64)"/><circle cx="1179" cy="300.5" r="8" fill="rgba(34,224,217,0.64)"/><circle cx="1181" cy="299.5" r="8.5" fill="rgba(34,224,217,0.64)"/><circle cx="1184" cy="300.5" r="9" fill="rgba(34,224,217,0.64)"/><circle cx="1179" cy="302.5" r="7" fill="rgba(34,224,217,0.64)"/><circle cx="1183" cy="303.5" r="8" fill="rgba(34,224,217,0.64)"/><circle cx="1188" cy="304.5" r="8.5" fill="rgba(34,224,217,0.64)"/><circle cx="1213" cy="309.7" r="7" fill="rgba(34,224,217,0.64)"/><circle cx="1214.5" cy="309.9" r="7.5" fill="rgba(34,224,217,0.64)"/><circle cx="1216" cy="309.9" r="6" fill="rgba(34,224,217,0.64)"/><circle cx="1193" cy="307.5" r="7" fill="rgba(34,224,217,0.64)"/><circle cx="1198" cy="308.5" r="6" fill="rgba(34,224,217,0.64)"/><circle cx="1203" cy="308.5" r="6" fill="rgba(34,224,217,0.64)"/><circle cx="1178" cy="305.5" r="6.5" fill="rgba(34,224,217,0.64)"/><circle cx="1182" cy="309.5" r="6.5" fill="rgba(34,224,217,0.64)"/></svg>
<div style="position:absolute;left:1141px;top:349.3px;width:289px;height:6.7px;background:#333;border-radius:0px;"></div>
<div style="position:absolute;top:360.80px;font-size:12px;line-height:16px;color:#9c9c9c;font-weight:700;white-space:pre;left:1083.80px;width:400px;text-align:center;">Performance by Item revenue &amp; Purchase to add-</div>
<div style="position:absolute;top:382.10px;font-size:12px;line-height:16px;color:#9c9c9c;font-weight:700;white-space:pre;left:1083.70px;width:400px;text-align:center;">to-cart rate</div>
<svg style="position:absolute;left:1362px;top:396.2px;" width="18" height="12" viewBox="0 0 18 12"><rect x="0" y="0" width="18" height="2" fill="#fff"/><rect x="3" y="5" width="12" height="2" fill="#fff"/><rect x="7" y="10" width="4" height="2" fill="#fff"/></svg>
<svg style="position:absolute;left:1406.5px;top:396.1px;" width="5" height="17" viewBox="0 0 5 17"><circle cx="2.5" cy="2.5" r="2.1" fill="#fff"/><circle cx="2.5" cy="8.5" r="2.1" fill="#fff"/><circle cx="2.5" cy="14.5" r="2.1" fill="#fff"/></svg>
<div style="position:absolute;top:438.70px;font-size:9.6px;line-height:12px;color:#c4c4c4;font-weight:400;white-space:pre;left:1156.00px;">10...</div>
<div style="position:absolute;top:505.70px;font-size:9.6px;line-height:12px;color:#c4c4c4;font-weight:400;white-space:pre;right:277.40px;text-align:right;">5000.</div>
<div style="position:absolute;top:517.70px;font-size:9.6px;line-height:12px;color:#c4c4c4;font-weight:400;white-space:pre;right:277.40px;text-align:right;">00%</div>
<div style="position:absolute;top:572.70px;font-size:9.6px;line-height:12px;color:#c4c4c4;font-weight:400;white-space:pre;right:277.40px;text-align:right;">0.</div>
<div style="position:absolute;top:584.40px;font-size:9.6px;line-height:12px;color:#c4c4c4;font-weight:400;white-space:pre;right:277.40px;text-align:right;">00%</div>
<div style="position:absolute;left:1066.5px;top:507px;width:150px;height:12px;line-height:12px;font-size:9.6px;color:#c4c4c4;text-align:center;transform:rotate(-90deg);white-space:pre">Purchase to add-to-cart rate</div>
<div style="position:absolute;top:586.70px;font-size:9.6px;line-height:12px;color:#c4c4c4;font-weight:400;white-space:pre;left:977.70px;width:400px;text-align:center;">0</div>
<div style="position:absolute;top:586.70px;font-size:9.6px;line-height:12px;color:#c4c4c4;font-weight:400;white-space:pre;left:1096.30px;width:400px;text-align:center;">20K</div>
<div style="position:absolute;top:586.70px;font-size:9.6px;line-height:12px;color:#c4c4c4;font-weight:400;white-space:pre;left:1214.50px;width:400px;text-align:center;">40K</div>
<div style="position:absolute;top:596.60px;font-size:9.6px;line-height:12px;color:#c4c4c4;font-weight:400;white-space:pre;left:1095.90px;width:400px;text-align:center;">Item revenue</div>
<svg style="position:absolute;left:0px;top:0px;pointer-events:none;" width="1452" height="1080" viewBox="0 0 1452 1080"><circle cx="1177" cy="514.4" r="2.4" fill="rgba(34,224,217,0.64)"/><circle cx="1318.5" cy="579.1" r="15.5" fill="rgba(34,224,217,0.64)"/><circle cx="1310" cy="579.1" r="7.1" fill="rgba(34,224,217,0.64)"/><circle cx="1266.8" cy="579.1" r="4.9" fill="rgba(34,224,217,0.64)"/><circle cx="1232.5" cy="579.4" r="10.2" fill="rgba(34,224,217,0.64)"/><circle cx="1240.9" cy="577.6" r="10.6" fill="rgba(34,224,217,0.64)"/><circle cx="1244.2" cy="578" r="7.8" fill="rgba(34,224,217,0.64)"/><circle cx="1181.5" cy="579.1" r="9.5" fill="rgba(34,224,217,0.64)"/><circle cx="1188.1" cy="579.1" r="12.9" fill="rgba(34,224,217,0.64)"/><circle cx="1207.6" cy="579.1" r="10.6" fill="rgba(34,224,217,0.64)"/><circle cx="1196.5" cy="579.1" r="8.4" fill="rgba(34,224,217,0.64)"/><circle cx="1212" cy="579.1" r="8.4" fill="rgba(34,224,217,0.64)"/><circle cx="1219.8" cy="579.1" r="4.9" fill="rgba(34,224,217,0.64)"/><circle cx="1177.6" cy="579.1" r="6.4" fill="rgba(34,224,217,0.64)"/><circle cx="1180.5" cy="579.1" r="7.2" fill="rgba(34,224,217,0.64)"/><circle cx="1183.5" cy="579.1" r="7.8" fill="rgba(34,224,217,0.64)"/><circle cx="1186.5" cy="579.1" r="8" fill="rgba(34,224,217,0.64)"/><circle cx="1189.5" cy="579.1" r="8" fill="rgba(34,224,217,0.64)"/><circle cx="1192.5" cy="579.1" r="7.4" fill="rgba(34,224,217,0.64)"/><circle cx="1195.5" cy="579.1" r="7" fill="rgba(34,224,217,0.64)"/><circle cx="1198.5" cy="579.1" r="6.6" fill="rgba(34,224,217,0.64)"/><circle cx="1201.5" cy="579.1" r="6.6" fill="rgba(34,224,217,0.64)"/><circle cx="1204.5" cy="579.1" r="6.8" fill="rgba(34,224,217,0.64)"/><circle cx="1207.5" cy="579.1" r="7" fill="rgba(34,224,217,0.64)"/><circle cx="1210.5" cy="579.1" r="6.8" fill="rgba(34,224,217,0.64)"/><circle cx="1213" cy="579.1" r="6.4" fill="rgba(34,224,217,0.64)"/><circle cx="1215" cy="579.1" r="5.6" fill="rgba(34,224,217,0.64)"/><circle cx="1181" cy="579.1" r="6" fill="rgba(34,224,217,0.64)"/><circle cx="1185" cy="579.1" r="6.5" fill="rgba(34,224,217,0.64)"/><circle cx="1189" cy="579.1" r="6.5" fill="rgba(34,224,217,0.64)"/><circle cx="1193" cy="579.1" r="6" fill="rgba(34,224,217,0.64)"/><circle cx="1199" cy="579.1" r="5.5" fill="rgba(34,224,217,0.64)"/><circle cx="1205" cy="579.1" r="5.5" fill="rgba(34,224,217,0.64)"/><circle cx="1209" cy="579.1" r="5.5" fill="rgba(34,224,217,0.64)"/></svg>
<div style="position:absolute;top:647.00px;font-size:14.4px;line-height:19px;color:#a8a8a8;font-weight:700;white-space:pre;left:210.20px;">Performance by Product, Category, and Brand</div>
<div style="position:absolute;top:646.00px;font-size:12px;line-height:16px;color:#fff;font-weight:400;white-space:pre;left:563.70px;">Item name</div>
<div style="position:absolute;top:647.80px;font-size:12px;line-height:16px;color:#fff;font-weight:400;white-space:pre;left:635.00px;">Contains</div>
<svg style="position:absolute;left:713.8px;top:654.3px;" width="11.2" height="6" viewBox="0 0 11.2 6"><path d="M0 0H11.2L5.6 6Z" fill="#fff"/></svg>
<div style="position:absolute;left:633px;top:673px;width:102px;height:1px;background:#6a6a6a;border-radius:0px;"></div>
<div style="position:absolute;top:647.80px;font-size:12px;line-height:16px;color:#636363;font-weight:400;white-space:pre;left:743.70px;">Enter a value</div>
<div style="position:absolute;left:741.2px;top:673px;width:74.59999999999991px;height:1px;background:#6a6a6a;border-radius:0px;"></div>
<div style="position:absolute;top:646.00px;font-size:12px;line-height:16px;color:#fff;font-weight:400;white-space:pre;left:888.00px;">Item category</div>
<div style="position:absolute;top:647.80px;font-size:12px;line-height:16px;color:#fff;font-weight:400;white-space:pre;left:975.00px;">Contains</div>
<svg style="position:absolute;left:1054.5px;top:654.3px;" width="11.2" height="6" viewBox="0 0 11.2 6"><path d="M0 0H11.2L5.6 6Z" fill="#fff"/></svg>
<div style="position:absolute;left:973px;top:673px;width:102px;height:1px;background:#6a6a6a;border-radius:0px;"></div>
<div style="position:absolute;top:647.80px;font-size:12px;line-height:16px;color:#636363;font-weight:400;white-space:pre;left:1083.20px;">Enter a value</div>
<div style="position:absolute;left:1080.8px;top:673px;width:76.20000000000005px;height:1px;background:#6a6a6a;border-radius:0px;"></div>
<div style="position:absolute;top:676.50px;font-size:8.4px;line-height:11px;color:#e3b505;font-weight:700;white-space:pre;left:1189.30px;">Change Granularity</div>
<svg style="position:absolute;left:1221px;top:687.1px;" width="16" height="16" viewBox="0 0 16 16"><path d="M8 16V1.8M0.9 8.7L8 1.5L15.1 8.7" fill="none" stroke="#6e6e6e" stroke-width="2.1"/></svg>
<svg style="position:absolute;left:1259px;top:687.1px;" width="16" height="16" viewBox="0 0 16 16"><path d="M8 0V14.2M0.9 7.3L8 14.5L15.1 7.3" fill="none" stroke="#fff" stroke-width="2.1"/></svg>
<svg style="position:absolute;left:1296.2px;top:684.7px;" width="19.6" height="19" viewBox="0 0 19.6 19"><path d="M8.4 2.35H3.2A2 2 0 0 0 1.25 4.3V15.7A2 2 0 0 0 3.2 17.65H15A2 2 0 0 0 16.95 15.7V11" fill="none" stroke="#fff" stroke-width="2.1"/><rect x="4" y="8.9" width="1.9" height="6" fill="#fff"/><rect x="8.2" y="7.2" width="1.9" height="7.7" fill="#fff"/><rect x="12.3" y="11.2" width="1.9" height="3.7" fill="#fff"/><circle cx="15.2" cy="4.0" r="2.35" fill="none" stroke="#fff" stroke-width="1.9"/><rect x="14.25" y="-0.2999999999999998" width="1.9" height="2" fill="#fff" transform="rotate(0 15.2 4.0)"/><rect x="14.25" y="-0.2999999999999998" width="1.9" height="2" fill="#fff" transform="rotate(45 15.2 4.0)"/><rect x="14.25" y="-0.2999999999999998" width="1.9" height="2" fill="#fff" transform="rotate(90 15.2 4.0)"/><rect x="14.25" y="-0.2999999999999998" width="1.9" height="2" fill="#fff" transform="rotate(135 15.2 4.0)"/><rect x="14.25" y="-0.2999999999999998" width="1.9" height="2" fill="#fff" transform="rotate(180 15.2 4.0)"/><rect x="14.25" y="-0.2999999999999998" width="1.9" height="2" fill="#fff" transform="rotate(225 15.2 4.0)"/><rect x="14.25" y="-0.2999999999999998" width="1.9" height="2" fill="#fff" transform="rotate(270 15.2 4.0)"/><rect x="14.25" y="-0.2999999999999998" width="1.9" height="2" fill="#fff" transform="rotate(315 15.2 4.0)"/></svg>
<div style="position:absolute;top:700.80px;font-size:8.4px;line-height:11px;color:#e3b505;font-weight:700;white-space:pre;left:1285.50px;">Change Metrics</div>
<div style="position:absolute;left:1334px;top:683.2px;width:1px;height:21.5px;background:#555;border-radius:0px;"></div>
<svg style="position:absolute;left:1355px;top:688.9px;" width="18" height="12" viewBox="0 0 18 12"><rect x="0" y="0" width="18" height="2" fill="#fff"/><rect x="3" y="5" width="12" height="2" fill="#fff"/><rect x="7" y="10" width="4" height="2" fill="#fff"/></svg>
<svg style="position:absolute;left:1399.5px;top:687.5px;" width="5" height="17" viewBox="0 0 5 17"><circle cx="2.5" cy="2.5" r="2.1" fill="#fff"/><circle cx="2.5" cy="8.5" r="2.1" fill="#fff"/><circle cx="2.5" cy="14.5" r="2.1" fill="#fff"/></svg>
<div style="position:absolute;top:720.00px;font-size:12px;line-height:16px;color:#dedede;font-weight:700;white-space:pre;left:212.50px;">Item name</div>
<div style="position:absolute;top:720.00px;font-size:12px;line-height:16px;color:#dedede;font-weight:700;white-space:pre;left:439.00px;">Items viewed</div>
<div style="position:absolute;top:720.00px;font-size:12px;line-height:16px;color:#dedede;font-weight:700;white-space:pre;left:368.00px;width:400px;text-align:center;">% Δ</div>
<div style="position:absolute;top:720.00px;font-size:12px;line-height:16px;color:#dedede;font-weight:700;white-space:pre;left:614.20px;">Items added to cart</div>
<div style="position:absolute;top:720.00px;font-size:12px;line-height:16px;color:#dedede;font-weight:700;white-space:pre;left:571.00px;width:400px;text-align:center;">% Δ</div>
<div style="position:absolute;top:720.00px;font-size:12px;line-height:16px;color:#dedede;font-weight:700;white-space:pre;left:818.20px;">Items checked out</div>
<div style="position:absolute;top:720.00px;font-size:12px;line-height:16px;color:#dedede;font-weight:700;white-space:pre;left:766.50px;width:400px;text-align:center;">% Δ</div>
<div style="position:absolute;top:720.00px;font-size:12px;line-height:16px;color:#dedede;font-weight:700;white-space:pre;left:1018.20px;">Items purchased</div>
<div style="position:absolute;top:720.00px;font-size:12px;line-height:16px;color:#dedede;font-weight:700;white-space:pre;left:975.40px;width:400px;text-align:center;">% Δ</div>
<div style="position:absolute;top:720.00px;font-size:12px;line-height:16px;color:#dedede;font-weight:700;white-space:pre;left:1228.00px;">Item revenue</div>
<svg style="position:absolute;left:1310.5px;top:726px;" width="5.2" height="3" viewBox="0 0 5.2 3"><path d="M0 0H5.2L2.6 3Z" fill="#dedede"/></svg>
<div style="position:absolute;top:720.00px;font-size:12px;line-height:16px;color:#dedede;font-weight:700;white-space:pre;left:1350.00px;">% Δ</div>
<div style="position:absolute;left:1218px;top:740px;width:122px;height:31px;background:rgba(34,230,220,1.000);border-radius:0px;"></div>
<div style="position:absolute;top:748.00px;font-size:10.8px;line-height:14px;color:#d6d6d6;font-weight:400;white-space:pre;left:212.50px;">Android Pint-sized Keychain</div>
<div style="position:absolute;top:748.00px;font-size:10.8px;line-height:14px;color:#d6d6d6;font-weight:400;white-space:pre;right:988.80px;text-align:right;">1,176</div>
<div style="position:absolute;left:466px;top:750px;width:16px;height:11px;background:#22e0d9;border-radius:0px;"></div>
<div style="position:absolute;top:748.00px;font-size:10.8px;line-height:14px;color:#d6d6d6;font-weight:400;white-space:pre;right:805.70px;text-align:right;">3,690</div>
<div style="position:absolute;left:649px;top:750px;width:44px;height:11px;background:#22e0d9;border-radius:0px;"></div>
<div style="position:absolute;top:748.00px;font-size:10.8px;line-height:14px;color:#d6d6d6;font-weight:400;white-space:pre;right:601.50px;text-align:right;">1,821</div>
<div style="position:absolute;left:853px;top:750px;width:34px;height:11px;background:#22e0d9;border-radius:0px;"></div>
<div style="position:absolute;top:748.00px;font-size:10.8px;line-height:14px;color:#d6d6d6;font-weight:400;white-space:pre;right:409.50px;text-align:right;">1,485</div>
<div style="position:absolute;left:1045px;top:750px;width:77px;height:11px;background:#22e0d9;border-radius:0px;"></div>
<div style="position:absolute;top:748.00px;font-size:10.8px;line-height:14px;color:#d6d6d6;font-weight:400;white-space:pre;left:367.80px;width:400px;text-align:center;">-</div>
<div style="position:absolute;top:748.00px;font-size:10.8px;line-height:14px;color:#d6d6d6;font-weight:400;white-space:pre;left:571.30px;width:400px;text-align:center;">-</div>
<div style="position:absolute;top:748.00px;font-size:10.8px;line-height:14px;color:#d6d6d6;font-weight:400;white-space:pre;left:766.80px;width:400px;text-align:center;">-</div>
<div style="position:absolute;top:748.00px;font-size:10.8px;line-height:14px;color:#d6d6d6;font-weight:400;white-space:pre;left:975.50px;width:400px;text-align:center;">-</div>
<div style="position:absolute;top:748.00px;font-size:10.8px;line-height:14px;color:#404a4a;font-weight:400;white-space:pre;left:1228.00px;">$23,892</div>
<div style="position:absolute;top:748.00px;font-size:10.8px;line-height:14px;color:#d6d6d6;font-weight:400;white-space:pre;left:1349.70px;">-</div>
<div style="position:absolute;left:1218px;top:771px;width:122px;height:31px;background:rgba(34,230,220,0.946);border-radius:0px;"></div>
<div style="position:absolute;top:779.00px;font-size:10.8px;line-height:14px;color:#d6d6d6;font-weight:400;white-space:pre;left:212.50px;">Chrome Dino Festive Frost Sweater</div>
<div style="position:absolute;top:779.00px;font-size:10.8px;line-height:14px;color:#d6d6d6;font-weight:400;white-space:pre;right:988.80px;text-align:right;">4,047</div>
<div style="position:absolute;left:466px;top:781px;width:56px;height:11px;background:#22e0d9;border-radius:0px;"></div>
<div style="position:absolute;top:779.00px;font-size:10.8px;line-height:14px;color:#d6d6d6;font-weight:400;white-space:pre;right:805.70px;text-align:right;">1,973</div>
<div style="position:absolute;left:649px;top:781px;width:23px;height:11px;background:#22e0d9;border-radius:0px;"></div>
<div style="position:absolute;top:779.00px;font-size:10.8px;line-height:14px;color:#d6d6d6;font-weight:400;white-space:pre;right:601.50px;text-align:right;">905</div>
<div style="position:absolute;left:853px;top:781px;width:17px;height:11px;background:#22e0d9;border-radius:0px;"></div>
<div style="position:absolute;top:779.00px;font-size:10.8px;line-height:14px;color:#d6d6d6;font-weight:400;white-space:pre;right:409.50px;text-align:right;">329</div>
<div style="position:absolute;left:1045px;top:781px;width:17px;height:11px;background:#22e0d9;border-radius:0px;"></div>
<div style="position:absolute;top:779.00px;font-size:10.8px;line-height:14px;color:#d6d6d6;font-weight:400;white-space:pre;left:367.80px;width:400px;text-align:center;">-</div>
<div style="position:absolute;top:779.00px;font-size:10.8px;line-height:14px;color:#d6d6d6;font-weight:400;white-space:pre;left:571.30px;width:400px;text-align:center;">-</div>
<div style="position:absolute;top:779.00px;font-size:10.8px;line-height:14px;color:#d6d6d6;font-weight:400;white-space:pre;left:766.80px;width:400px;text-align:center;">-</div>
<div style="position:absolute;top:779.00px;font-size:10.8px;line-height:14px;color:#d6d6d6;font-weight:400;white-space:pre;left:975.50px;width:400px;text-align:center;">-</div>
<div style="position:absolute;top:779.00px;font-size:10.8px;line-height:14px;color:#404a4a;font-weight:400;white-space:pre;left:1228.00px;">$22,612.8</div>
<div style="position:absolute;top:779.00px;font-size:10.8px;line-height:14px;color:#d6d6d6;font-weight:400;white-space:pre;left:1349.70px;">-</div>
<div style="position:absolute;left:1218px;top:802px;width:122px;height:31px;background:rgba(34,230,220,0.638);border-radius:0px;"></div>
<div style="position:absolute;top:810.00px;font-size:10.8px;line-height:14px;color:#d6d6d6;font-weight:400;white-space:pre;left:212.50px;">Google Timbuk2 City Backpack</div>
<div style="position:absolute;top:810.00px;font-size:10.8px;line-height:14px;color:#d6d6d6;font-weight:400;white-space:pre;right:988.80px;text-align:right;">2,123</div>
<div style="position:absolute;left:466px;top:812px;width:29px;height:11px;background:#22e0d9;border-radius:0px;"></div>
<div style="position:absolute;top:810.00px;font-size:10.8px;line-height:14px;color:#d6d6d6;font-weight:400;white-space:pre;right:805.70px;text-align:right;">799</div>
<div style="position:absolute;left:649px;top:812px;width:9px;height:11px;background:#22e0d9;border-radius:0px;"></div>
<div style="position:absolute;top:810.00px;font-size:10.8px;line-height:14px;color:#d6d6d6;font-weight:400;white-space:pre;right:601.50px;text-align:right;">361</div>
<div style="position:absolute;left:853px;top:812px;width:7px;height:11px;background:#22e0d9;border-radius:0px;"></div>
<div style="position:absolute;top:810.00px;font-size:10.8px;line-height:14px;color:#d6d6d6;font-weight:400;white-space:pre;right:409.50px;text-align:right;">153</div>
<div style="position:absolute;left:1045px;top:812px;width:8px;height:11px;background:#22e0d9;border-radius:0px;"></div>
<div style="position:absolute;top:810.00px;font-size:10.8px;line-height:14px;color:#d6d6d6;font-weight:400;white-space:pre;left:465.9px;width:200px;text-align:center;">64.6%<svg width="3.6" height="6.3" viewBox="0 0 4 7" style="margin-left:3.8px;position:relative;top:-0.7px"><g><path d="M2 0 L4 2.9 L3.1 2.9 L3.1 5.2 L0.9 5.2 L0.9 2.9 L0 2.9Z" fill="#22e0d9"/><rect x="0.5" y="5.2" width="3" height="1.8" fill="#22e0d9" opacity="0.62"/></g></svg></div>
<div style="position:absolute;top:810.00px;font-size:10.8px;line-height:14px;color:#d6d6d6;font-weight:400;white-space:pre;left:669.4px;width:200px;text-align:center;">474.8%<svg width="3.6" height="6.3" viewBox="0 0 4 7" style="margin-left:3.8px;position:relative;top:-0.7px"><g><path d="M2 0 L4 2.9 L3.1 2.9 L3.1 5.2 L0.9 5.2 L0.9 2.9 L0 2.9Z" fill="#22e0d9"/><rect x="0.5" y="5.2" width="3" height="1.8" fill="#22e0d9" opacity="0.62"/></g></svg></div>
<div style="position:absolute;top:810.00px;font-size:10.8px;line-height:14px;color:#d6d6d6;font-weight:400;white-space:pre;left:864.9px;width:200px;text-align:center;">250.5%<svg width="3.6" height="6.3" viewBox="0 0 4 7" style="margin-left:3.8px;position:relative;top:-0.7px"><g><path d="M2 0 L4 2.9 L3.1 2.9 L3.1 5.2 L0.9 5.2 L0.9 2.9 L0 2.9Z" fill="#22e0d9"/><rect x="0.5" y="5.2" width="3" height="1.8" fill="#22e0d9" opacity="0.62"/></g></svg></div>
<div style="position:absolute;top:810.00px;font-size:10.8px;line-height:14px;color:#d6d6d6;font-weight:400;white-space:pre;left:1073.6000000000001px;width:200px;text-align:center;">750.0%<svg width="3.6" height="6.3" viewBox="0 0 4 7" style="margin-left:3.8px;position:relative;top:-0.7px"><g><path d="M2 0 L4 2.9 L3.1 2.9 L3.1 5.2 L0.9 5.2 L0.9 2.9 L0 2.9Z" fill="#22e0d9"/><rect x="0.5" y="5.2" width="3" height="1.8" fill="#22e0d9" opacity="0.62"/></g></svg></div>
<div style="position:absolute;top:810.00px;font-size:10.8px;line-height:14px;color:#0c0c0c;font-weight:400;white-space:pre;left:1228.00px;">$15,252</div>
<div style="position:absolute;top:810.00px;font-size:10.8px;line-height:14px;color:#d6d6d6;font-weight:400;white-space:pre;left:1349.7px;">720.0%<svg width="3.6" height="6.3" viewBox="0 0 4 7" style="margin-left:3.8px;position:relative;top:-0.7px"><g><path d="M2 0 L4 2.9 L3.1 2.9 L3.1 5.2 L0.9 5.2 L0.9 2.9 L0 2.9Z" fill="#22e0d9"/><rect x="0.5" y="5.2" width="3" height="1.8" fill="#22e0d9" opacity="0.62"/></g></svg></div>
<div style="position:absolute;left:1218px;top:833px;width:122px;height:31px;background:rgba(34,230,220,0.477);border-radius:0px;"></div>
<div style="position:absolute;top:841.00px;font-size:10.8px;line-height:14px;color:#d6d6d6;font-weight:400;white-space:pre;left:212.50px;">Chrome Dino Festive Frost Scarf</div>
<div style="position:absolute;top:841.00px;font-size:10.8px;line-height:14px;color:#d6d6d6;font-weight:400;white-space:pre;right:988.80px;text-align:right;">740</div>
<div style="position:absolute;left:466px;top:843px;width:10px;height:11px;background:#22e0d9;border-radius:0px;"></div>
<div style="position:absolute;top:841.00px;font-size:10.8px;line-height:14px;color:#d6d6d6;font-weight:400;white-space:pre;right:805.70px;text-align:right;">412</div>
<div style="position:absolute;left:649px;top:843px;width:5px;height:11px;background:#22e0d9;border-radius:0px;"></div>
<div style="position:absolute;top:841.00px;font-size:10.8px;line-height:14px;color:#d6d6d6;font-weight:400;white-space:pre;right:601.50px;text-align:right;">1,003</div>
<div style="position:absolute;left:853px;top:843px;width:19px;height:11px;background:#22e0d9;border-radius:0px;"></div>
<div style="position:absolute;top:841.00px;font-size:10.8px;line-height:14px;color:#d6d6d6;font-weight:400;white-space:pre;right:409.50px;text-align:right;">373</div>
<div style="position:absolute;left:1045px;top:843px;width:19px;height:11px;background:#22e0d9;border-radius:0px;"></div>
<div style="position:absolute;top:841.00px;font-size:10.8px;line-height:14px;color:#d6d6d6;font-weight:400;white-space:pre;left:367.80px;width:400px;text-align:center;">-</div>
<div style="position:absolute;top:841.00px;font-size:10.8px;line-height:14px;color:#d6d6d6;font-weight:400;white-space:pre;left:571.30px;width:400px;text-align:center;">-</div>
<div style="position:absolute;top:841.00px;font-size:10.8px;line-height:14px;color:#d6d6d6;font-weight:400;white-space:pre;left:766.80px;width:400px;text-align:center;">-</div>
<div style="position:absolute;top:841.00px;font-size:10.8px;line-height:14px;color:#d6d6d6;font-weight:400;white-space:pre;left:975.50px;width:400px;text-align:center;">-</div>
<div style="position:absolute;top:841.00px;font-size:10.8px;line-height:14px;color:#ffffff;font-weight:400;white-space:pre;left:1228.00px;">$11,386</div>
<div style="position:absolute;top:841.00px;font-size:10.8px;line-height:14px;color:#d6d6d6;font-weight:400;white-space:pre;left:1349.70px;">-</div>
<div style="position:absolute;left:1218px;top:864px;width:122px;height:31px;background:rgba(34,230,220,0.453);border-radius:0px;"></div>
<div style="position:absolute;top:872.00px;font-size:10.8px;line-height:14px;color:#d6d6d6;font-weight:400;white-space:pre;left:212.50px;">Chrome Dino Festive Frost Socks</div>
<div style="position:absolute;top:872.00px;font-size:10.8px;line-height:14px;color:#d6d6d6;font-weight:400;white-space:pre;right:988.80px;text-align:right;">718</div>
<div style="position:absolute;left:466px;top:874px;width:10px;height:11px;background:#22e0d9;border-radius:0px;"></div>
<div style="position:absolute;top:872.00px;font-size:10.8px;line-height:14px;color:#d6d6d6;font-weight:400;white-space:pre;right:805.70px;text-align:right;">1,602</div>
<div style="position:absolute;left:649px;top:874px;width:19px;height:11px;background:#22e0d9;border-radius:0px;"></div>
<div style="position:absolute;top:872.00px;font-size:10.8px;line-height:14px;color:#d6d6d6;font-weight:400;white-space:pre;right:601.50px;text-align:right;">2,532</div>
<div style="position:absolute;left:853px;top:874px;width:48px;height:11px;background:#22e0d9;border-radius:0px;"></div>
<div style="position:absolute;top:872.00px;font-size:10.8px;line-height:14px;color:#d6d6d6;font-weight:400;white-space:pre;right:409.50px;text-align:right;">747</div>
<div style="position:absolute;left:1045px;top:874px;width:39px;height:11px;background:#22e0d9;border-radius:0px;"></div>
<div style="position:absolute;top:872.00px;font-size:10.8px;line-height:14px;color:#d6d6d6;font-weight:400;white-space:pre;left:367.80px;width:400px;text-align:center;">-</div>
<div style="position:absolute;top:872.00px;font-size:10.8px;line-height:14px;color:#d6d6d6;font-weight:400;white-space:pre;left:571.30px;width:400px;text-align:center;">-</div>
<div style="position:absolute;top:872.00px;font-size:10.8px;line-height:14px;color:#d6d6d6;font-weight:400;white-space:pre;left:766.80px;width:400px;text-align:center;">-</div>
<div style="position:absolute;top:872.00px;font-size:10.8px;line-height:14px;color:#d6d6d6;font-weight:400;white-space:pre;left:975.50px;width:400px;text-align:center;">-</div>
<div style="position:absolute;top:872.00px;font-size:10.8px;line-height:14px;color:#ffffff;font-weight:400;white-space:pre;left:1228.00px;">$10,832.4</div>
<div style="position:absolute;top:872.00px;font-size:10.8px;line-height:14px;color:#d6d6d6;font-weight:400;white-space:pre;left:1349.70px;">-</div>
<div style="position:absolute;left:1218px;top:895px;width:122px;height:31px;background:rgba(34,230,220,0.395);border-radius:0px;"></div>
<div style="position:absolute;top:903.00px;font-size:10.8px;line-height:14px;color:#d6d6d6;font-weight:400;white-space:pre;left:212.50px;">Chrome Dino Festive Frost Mug</div>
<div style="position:absolute;top:903.00px;font-size:10.8px;line-height:14px;color:#d6d6d6;font-weight:400;white-space:pre;right:988.80px;text-align:right;">1,814</div>
<div style="position:absolute;left:466px;top:905px;width:25px;height:11px;background:#22e0d9;border-radius:0px;"></div>
<div style="position:absolute;top:903.00px;font-size:10.8px;line-height:14px;color:#d6d6d6;font-weight:400;white-space:pre;right:805.70px;text-align:right;">2,123</div>
<div style="position:absolute;left:649px;top:905px;width:25px;height:11px;background:#22e0d9;border-radius:0px;"></div>
<div style="position:absolute;top:903.00px;font-size:10.8px;line-height:14px;color:#d6d6d6;font-weight:400;white-space:pre;right:601.50px;text-align:right;">1,998</div>
<div style="position:absolute;left:853px;top:905px;width:38px;height:11px;background:#22e0d9;border-radius:0px;"></div>
<div style="position:absolute;top:903.00px;font-size:10.8px;line-height:14px;color:#d6d6d6;font-weight:400;white-space:pre;right:409.50px;text-align:right;">725</div>
<div style="position:absolute;left:1045px;top:905px;width:38px;height:11px;background:#22e0d9;border-radius:0px;"></div>
<div style="position:absolute;top:903.00px;font-size:10.8px;line-height:14px;color:#d6d6d6;font-weight:400;white-space:pre;left:367.80px;width:400px;text-align:center;">-</div>
<div style="position:absolute;top:903.00px;font-size:10.8px;line-height:14px;color:#d6d6d6;font-weight:400;white-space:pre;left:571.30px;width:400px;text-align:center;">-</div>
<div style="position:absolute;top:903.00px;font-size:10.8px;line-height:14px;color:#d6d6d6;font-weight:400;white-space:pre;left:766.80px;width:400px;text-align:center;">-</div>
<div style="position:absolute;top:903.00px;font-size:10.8px;line-height:14px;color:#d6d6d6;font-weight:400;white-space:pre;left:975.50px;width:400px;text-align:center;">-</div>
<div style="position:absolute;top:903.00px;font-size:10.8px;line-height:14px;color:#ffffff;font-weight:400;white-space:pre;left:1228.00px;">$9,443.2</div>
<div style="position:absolute;top:903.00px;font-size:10.8px;line-height:14px;color:#d6d6d6;font-weight:400;white-space:pre;left:1349.70px;">-</div>
<div style="position:absolute;left:1218px;top:926px;width:122px;height:31px;background:rgba(34,230,220,0.304);border-radius:0px;"></div>
<div style="position:absolute;top:934.00px;font-size:10.8px;line-height:14px;color:#d6d6d6;font-weight:400;white-space:pre;left:212.50px;">Google Driftwood 1/4 Zip</div>
<div style="position:absolute;top:934.00px;font-size:10.8px;line-height:14px;color:#d6d6d6;font-weight:400;white-space:pre;right:988.80px;text-align:right;">2,265</div>
<div style="position:absolute;left:466px;top:936px;width:31px;height:11px;background:#22e0d9;border-radius:0px;"></div>
<div style="position:absolute;top:934.00px;font-size:10.8px;line-height:14px;color:#d6d6d6;font-weight:400;white-space:pre;right:805.70px;text-align:right;">534</div>
<div style="position:absolute;left:649px;top:936px;width:6px;height:11px;background:#22e0d9;border-radius:0px;"></div>
<div style="position:absolute;top:934.00px;font-size:10.8px;line-height:14px;color:#d6d6d6;font-weight:400;white-space:pre;right:601.50px;text-align:right;">494</div>
<div style="position:absolute;left:853px;top:936px;width:9px;height:11px;background:#22e0d9;border-radius:0px;"></div>
<div style="position:absolute;top:934.00px;font-size:10.8px;line-height:14px;color:#d6d6d6;font-weight:400;white-space:pre;right:409.50px;text-align:right;">130</div>
<div style="position:absolute;left:1045px;top:936px;width:7px;height:11px;background:#22e0d9;border-radius:0px;"></div>
<div style="position:absolute;top:934.00px;font-size:10.8px;line-height:14px;color:#d6d6d6;font-weight:400;white-space:pre;left:464.9px;width:200px;text-align:center;">2,960.8…</div>
<div style="position:absolute;top:934.00px;font-size:10.8px;line-height:14px;color:#d6d6d6;font-weight:400;white-space:pre;left:669.4px;width:200px;text-align:center;">5,240.0%<svg width="3.6" height="6.3" viewBox="0 0 4 7" style="margin-left:3.8px;position:relative;top:-0.7px"><g><path d="M2 0 L4 2.9 L3.1 2.9 L3.1 5.2 L0.9 5.2 L0.9 2.9 L0 2.9Z" fill="#22e0d9"/><rect x="0.5" y="5.2" width="3" height="1.8" fill="#22e0d9" opacity="0.62"/></g></svg></div>
<div style="position:absolute;top:934.00px;font-size:10.8px;line-height:14px;color:#d6d6d6;font-weight:400;white-space:pre;left:863.9px;width:200px;text-align:center;">16,366.…</div>
<div style="position:absolute;top:934.00px;font-size:10.8px;line-height:14px;color:#d6d6d6;font-weight:400;white-space:pre;left:1073.6000000000001px;width:200px;text-align:center;">12,900.0%<svg width="3.6" height="6.3" viewBox="0 0 4 7" style="margin-left:3.8px;position:relative;top:-0.7px"><g><path d="M2 0 L4 2.9 L3.1 2.9 L3.1 5.2 L0.9 5.2 L0.9 2.9 L0 2.9Z" fill="#22e0d9"/><rect x="0.5" y="5.2" width="3" height="1.8" fill="#22e0d9" opacity="0.62"/></g></svg></div>
<div style="position:absolute;top:934.00px;font-size:10.8px;line-height:14px;color:#d0d0d0;font-weight:400;white-space:pre;left:1228.00px;">$7,272.6</div>
<div style="position:absolute;top:934.00px;font-size:10.8px;line-height:14px;color:#d6d6d6;font-weight:400;white-space:pre;left:1349.7px;">10,440.0%<svg width="3.6" height="6.3" viewBox="0 0 4 7" style="margin-left:3.8px;position:relative;top:-0.7px"><g><path d="M2 0 L4 2.9 L3.1 2.9 L3.1 5.2 L0.9 5.2 L0.9 2.9 L0 2.9Z" fill="#22e0d9"/><rect x="0.5" y="5.2" width="3" height="1.8" fill="#22e0d9" opacity="0.62"/></g></svg></div>
<div style="position:absolute;left:1218px;top:957px;width:122px;height:30.5px;background:rgba(34,230,220,0.291);border-radius:0px;"></div>
<div style="position:absolute;top:965.00px;font-size:10.8px;line-height:14px;color:#d6d6d6;font-weight:400;white-space:pre;left:212.50px;">Google Hakone Quilted Jacket</div>
<div style="position:absolute;top:965.00px;font-size:10.8px;line-height:14px;color:#d6d6d6;font-weight:400;white-space:pre;right:988.80px;text-align:right;">2,067</div>
<div style="position:absolute;left:466px;top:967px;width:29px;height:11px;background:#22e0d9;border-radius:0px;"></div>
<div style="position:absolute;top:965.00px;font-size:10.8px;line-height:14px;color:#d6d6d6;font-weight:400;white-space:pre;right:805.70px;text-align:right;">365</div>
<div style="position:absolute;left:649px;top:967px;width:4px;height:11px;background:#22e0d9;border-radius:0px;"></div>
<div style="position:absolute;top:965.00px;font-size:10.8px;line-height:14px;color:#d6d6d6;font-weight:400;white-space:pre;right:601.50px;text-align:right;">166</div>
<div style="position:absolute;left:853px;top:967px;width:3px;height:11px;background:#22e0d9;border-radius:0px;"></div>
<div style="position:absolute;top:965.00px;font-size:10.8px;line-height:14px;color:#d6d6d6;font-weight:400;white-space:pre;right:409.50px;text-align:right;">78</div>
<div style="position:absolute;left:1045px;top:967px;width:4px;height:11px;background:#22e0d9;border-radius:0px;"></div>
<div style="position:absolute;top:965.00px;font-size:10.8px;line-height:14px;color:#d6d6d6;font-weight:400;white-space:pre;left:464.9px;width:200px;text-align:center;">4,597.7…</div>
<div style="position:absolute;top:965.00px;font-size:10.8px;line-height:14px;color:#d6d6d6;font-weight:400;white-space:pre;left:669.4px;width:200px;text-align:center;">7,200.0%<svg width="3.6" height="6.3" viewBox="0 0 4 7" style="margin-left:3.8px;position:relative;top:-0.7px"><g><path d="M2 0 L4 2.9 L3.1 2.9 L3.1 5.2 L0.9 5.2 L0.9 2.9 L0 2.9Z" fill="#22e0d9"/><rect x="0.5" y="5.2" width="3" height="1.8" fill="#22e0d9" opacity="0.62"/></g></svg></div>
<div style="position:absolute;top:965.00px;font-size:10.8px;line-height:14px;color:#d6d6d6;font-weight:400;white-space:pre;left:863.9px;width:200px;text-align:center;">4,050.0…</div>
<div style="position:absolute;top:965.00px;font-size:10.8px;line-height:14px;color:#d6d6d6;font-weight:400;white-space:pre;left:1073.6000000000001px;width:200px;text-align:center;">7,700.0%<svg width="3.6" height="6.3" viewBox="0 0 4 7" style="margin-left:3.8px;position:relative;top:-0.7px"><g><path d="M2 0 L4 2.9 L3.1 2.9 L3.1 5.2 L0.9 5.2 L0.9 2.9 L0 2.9Z" fill="#22e0d9"/><rect x="0.5" y="5.2" width="3" height="1.8" fill="#22e0d9" opacity="0.62"/></g></svg></div>
<div style="position:absolute;top:965.00px;font-size:10.8px;line-height:14px;color:#d0d0d0;font-weight:400;white-space:pre;left:1228.00px;">$6,952</div>
<div style="position:absolute;top:965.00px;font-size:10.8px;line-height:14px;color:#d6d6d6;font-weight:400;white-space:pre;left:1349.7px;">7,800.0%<svg width="3.6" height="6.3" viewBox="0 0 4 7" style="margin-left:3.8px;position:relative;top:-0.7px"><g><path d="M2 0 L4 2.9 L3.1 2.9 L3.1 5.2 L0.9 5.2 L0.9 2.9 L0 2.9Z" fill="#22e0d9"/><rect x="0.5" y="5.2" width="3" height="1.8" fill="#22e0d9" opacity="0.62"/></g></svg></div>
<div style="position:absolute;left:203px;top:770.25px;width:1228px;height:1px;background:#4c4c4c;border-radius:0px;"></div>
<div style="position:absolute;left:203px;top:801.25px;width:1228px;height:1px;background:#4c4c4c;border-radius:0px;"></div>
<div style="position:absolute;left:203px;top:832.25px;width:1228px;height:1px;background:#4c4c4c;border-radius:0px;"></div>
<div style="position:absolute;left:203px;top:863.25px;width:1228px;height:1px;background:#4c4c4c;border-radius:0px;"></div>
<div style="position:absolute;left:203px;top:894.25px;width:1228px;height:1px;background:#4c4c4c;border-radius:0px;"></div>
<div style="position:absolute;left:203px;top:925.25px;width:1228px;height:1px;background:#4c4c4c;border-radius:0px;"></div>
<div style="position:absolute;left:203px;top:956.25px;width:1228px;height:1px;background:#4c4c4c;border-radius:0px;"></div>
<div style="position:absolute;left:203px;top:987.25px;width:1228px;height:1px;background:#4c4c4c;border-radius:0px;"></div>
<div style="position:absolute;top:995.00px;font-size:10.8px;line-height:14px;color:#e0e0e0;font-weight:700;white-space:pre;left:212.50px;">Grand total</div>
<div style="position:absolute;top:995.00px;font-size:10.8px;line-height:14px;color:#e0e0e0;font-weight:700;white-space:pre;left:276.00px;width:400px;text-align:center;">98,586</div>
<div style="position:absolute;top:995.00px;font-size:10.8px;line-height:14px;color:#e0e0e0;font-weight:700;white-space:pre;left:469.00px;width:400px;text-align:center;">81,278</div>
<div style="position:absolute;top:995.00px;font-size:10.8px;line-height:14px;color:#e0e0e0;font-weight:700;white-space:pre;left:670.50px;width:400px;text-align:center;">74,432</div>
<div style="position:absolute;top:995.00px;font-size:10.8px;line-height:14px;color:#e0e0e0;font-weight:700;white-space:pre;left:865.80px;width:400px;text-align:center;">24,761</div>
<div style="position:absolute;top:995.00px;font-size:10.8px;line-height:14px;color:#e0e0e0;font-weight:700;white-space:pre;left:465.9px;width:200px;text-align:center;">-3.1%<svg width="3.6" height="6.3" viewBox="0 0 4 7" style="margin-left:3.8px;position:relative;top:-0.7px"><g transform="rotate(180 2 3.5)"><path d="M2 0 L4 2.9 L3.1 2.9 L3.1 5.2 L0.9 5.2 L0.9 2.9 L0 2.9Z" fill="#e8453c"/><rect x="0.5" y="5.2" width="3" height="1.8" fill="#e8453c" opacity="0.62"/></g></svg></div>
<div style="position:absolute;top:995.00px;font-size:10.8px;line-height:14px;color:#e0e0e0;font-weight:700;white-space:pre;left:669.4px;width:200px;text-align:center;">10.7%<svg width="3.6" height="6.3" viewBox="0 0 4 7" style="margin-left:3.8px;position:relative;top:-0.7px"><g><path d="M2 0 L4 2.9 L3.1 2.9 L3.1 5.2 L0.9 5.2 L0.9 2.9 L0 2.9Z" fill="#22e0d9"/><rect x="0.5" y="5.2" width="3" height="1.8" fill="#22e0d9" opacity="0.62"/></g></svg></div>
<div style="position:absolute;top:995.00px;font-size:10.8px;line-height:14px;color:#e0e0e0;font-weight:700;white-space:pre;left:864.9px;width:200px;text-align:center;">13.7%<svg width="3.6" height="6.3" viewBox="0 0 4 7" style="margin-left:3.8px;position:relative;top:-0.7px"><g><path d="M2 0 L4 2.9 L3.1 2.9 L3.1 5.2 L0.9 5.2 L0.9 2.9 L0 2.9Z" fill="#22e0d9"/><rect x="0.5" y="5.2" width="3" height="1.8" fill="#22e0d9" opacity="0.62"/></g></svg></div>
<div style="position:absolute;top:995.00px;font-size:10.8px;line-height:14px;color:#e0e0e0;font-weight:700;white-space:pre;left:1072.9px;width:200px;text-align:center;">10.6%<svg width="3.6" height="6.3" viewBox="0 0 4 7" style="margin-left:3.8px;position:relative;top:-0.7px"><g><path d="M2 0 L4 2.9 L3.1 2.9 L3.1 5.2 L0.9 5.2 L0.9 2.9 L0 2.9Z" fill="#22e0d9"/><rect x="0.5" y="5.2" width="3" height="1.8" fill="#22e0d9" opacity="0.62"/></g></svg></div>
<div style="position:absolute;top:995.00px;font-size:10.8px;line-height:14px;color:#e0e0e0;font-weight:700;white-space:pre;left:1228.00px;">$379,236.11</div>
<div style="position:absolute;top:995.00px;font-size:10.8px;line-height:14px;color:#e0e0e0;font-weight:700;white-space:pre;left:1349.7px;">20.8%<svg width="3.6" height="6.3" viewBox="0 0 4 7" style="margin-left:3.8px;position:relative;top:-0.7px"><g><path d="M2 0 L4 2.9 L3.1 2.9 L3.1 5.2 L0.9 5.2 L0.9 2.9 L0 2.9Z" fill="#22e0d9"/><rect x="0.5" y="5.2" width="3" height="1.8" fill="#22e0d9" opacity="0.62"/></g></svg></div>
<div style="position:absolute;top:1028.00px;font-size:10.8px;line-height:14px;color:#cfcfcf;font-weight:400;white-space:pre;left:1282.50px;">1 - 100 / 501</div>
<svg style="position:absolute;left:1370px;top:1028px;" width="9" height="14" viewBox="0 0 9 14"><path d="M8 0.8L1.5 7L8 13.2" fill="none" stroke="#5a5a5a" stroke-width="1.5"/></svg>
<svg style="position:absolute;left:1410px;top:1028px;" width="9" height="14" viewBox="0 0 9 14"><path d="M1 0.8L7.5 7L1 13.2" fill="none" stroke="#fff" stroke-width="1.5"/></svg>
</div></body></html>
